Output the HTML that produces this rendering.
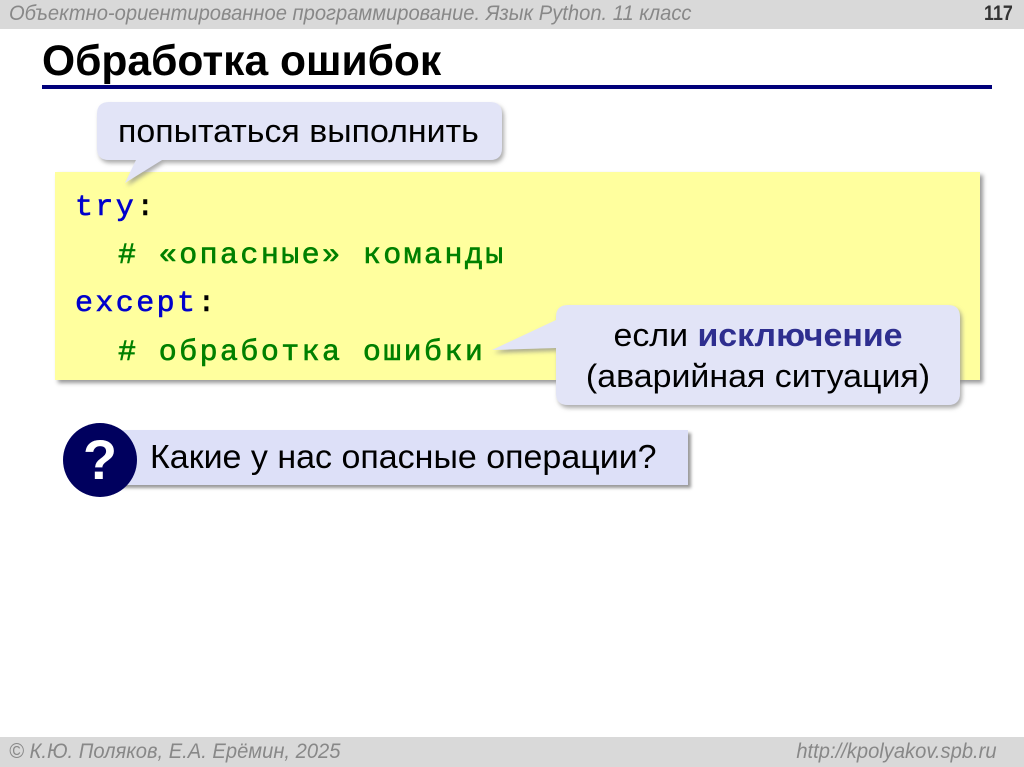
<!DOCTYPE html>
<html><head><meta charset="utf-8"><style>
body{margin:0;width:1024px;height:767px;position:relative;overflow:hidden;background:#fff;font-family:"Liberation Sans",sans-serif}
.a{position:absolute;white-space:nowrap}
.hdr{left:0;top:0;width:1024px;height:29px;background:#d9d9d9}
.ftr{left:0;top:737px;width:1024px;height:30px;background:#d9d9d9}
.it{font-style:italic;color:#888;font-size:21px;transform-origin:0 0;transform:scaleX(.96)}
.code{font-family:"Liberation Mono",monospace;font-size:30px;letter-spacing:2.4px;-webkit-text-stroke:0.6px}
.kw{color:#0000cc}.cm{color:#008000}
</style></head><body>
<div class="a hdr"></div>
<div class="a it" style="left:9px;top:2px">Объектно-ориентированное программирование. Язык Python. 11 класс</div>
<div class="a" style="left:984px;top:2px;font-size:21px;font-weight:bold;color:#333;transform:scaleX(.85);transform-origin:0 0">117</div>
<div class="a" style="left:42px;top:37px;font-size:43px;font-weight:bold;color:#000;transform:scaleX(.99);transform-origin:0 0">Обработка ошибок</div>
<div class="a" style="left:42px;top:85px;width:950px;height:4px;background:#00007a"></div>

<div class="a" style="left:55px;top:172px;width:925px;height:208px;background:#ffff9e;box-shadow:3px 3px 4px #999"></div>
<div class="a code" style="left:75px;top:191px"><span class="kw">try</span>:</div>
<div class="a code cm" style="left:118px;top:239px"># «опасные» команды</div>
<div class="a code" style="left:75px;top:287px"><span class="kw">except</span>:</div>
<div class="a code cm" style="left:118px;top:336px"># обработка ошибки</div>

<svg class="a" style="left:0;top:0" width="1024" height="767">
<defs><filter id="s" x="-10%" y="-10%" width="130%" height="140%"><feDropShadow dx="2" dy="3" stdDeviation="2" flood-color="#888" flood-opacity=".7"/></filter></defs>
<path filter="url(#s)" fill="#e2e4f7" d="M109 102H490Q502 102 502 114V148Q502 160 490 160H162L125 183L136 160H109Q97 160 97 148V114Q97 102 109 102Z"/>
<path filter="url(#s)" fill="#e2e4f7" d="M568 305H948Q960 305 960 317V393Q960 405 948 405H568Q556 405 556 393V348L492 350L556 320V317Q556 305 568 305Z"/>
</svg>
<div class="a" style="left:118px;top:113px;font-size:32px;color:#000;transform:scaleX(1.06);transform-origin:0 0">попытаться выполнить</div>
<div class="a" style="left:556px;top:315px;width:404px;text-align:center;font-size:32px;line-height:41px;color:#000"><div style="transform:scaleX(1.06)">если <b style="color:#2e2e8f">исключение</b><br>(аварийная ситуация)</div></div>

<div class="a" style="left:118px;top:430px;width:570px;height:55px;background:#dde0f8;box-shadow:3px 3px 3px #999"></div>
<div class="a" style="left:63px;top:423px;width:74px;height:74px;border-radius:50%;background:#00005e;color:#fff;font-size:56px;font-weight:bold;text-align:center;line-height:74px">?</div>
<div class="a" style="left:150px;top:438px;font-size:33px;color:#000;transform:scaleX(1.03);transform-origin:0 0">Какие у нас опасные операции?</div>

<div class="a ftr"></div>
<div class="a it" style="left:9px;top:740px">© К.Ю. Поляков, Е.А. Ерёмин, 2025</div>
<div class="a it" style="right:27px;top:740px;transform-origin:100% 0">http://kpolyakov.spb.ru</div>
</body></html>
